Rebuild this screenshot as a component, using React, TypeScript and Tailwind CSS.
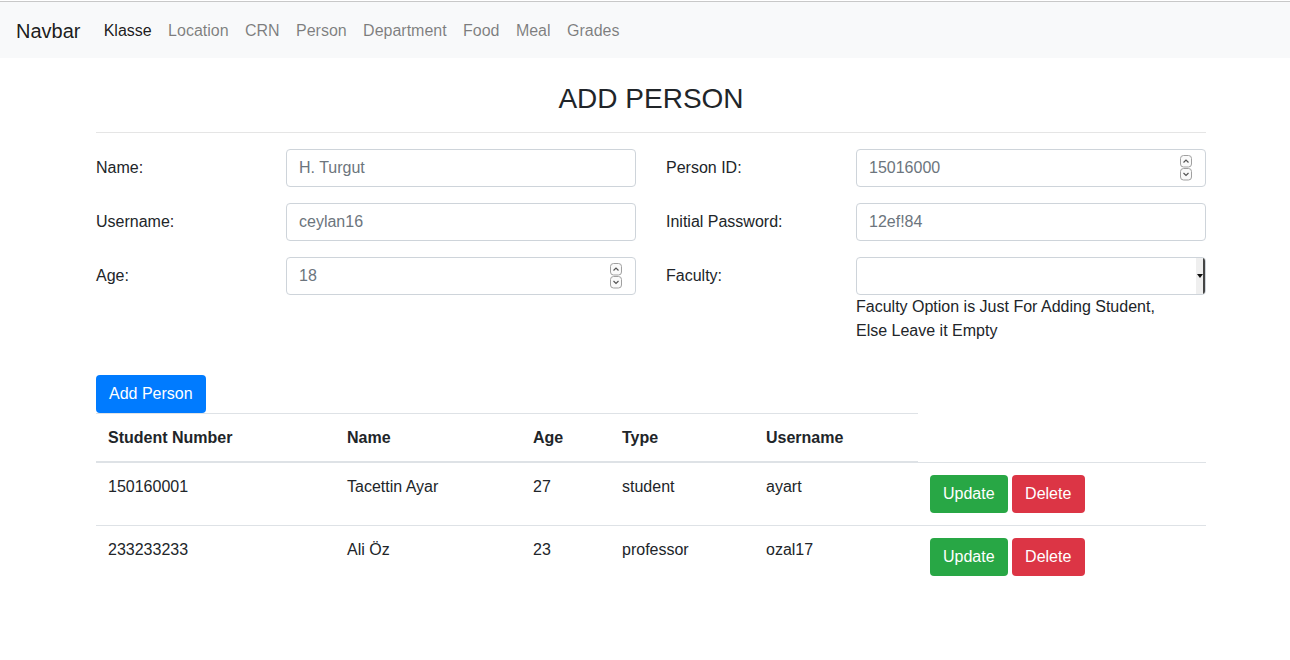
import React from 'react';

const NAV = ['Klasse', 'Location', 'CRN', 'Person', 'Department', 'Food', 'Meal', 'Grades'];

const PEOPLE = [
    { no: '150160001', name: 'Tacettin Ayar', age: '27', type: 'student', username: 'ayart' },
    { no: '233233233', name: 'Ali Öz', age: '23', type: 'professor', username: 'ozal17' },
];

// Small up/down spinner like the browser's number input
function Spinner() {
    return (
        <svg width="14" height="26" viewBox="0 0 14 26" className="absolute right-[13px] top-[6px]">
            <rect x="1.5" y="0.5" width="11" height="11.5" rx="3" fill="#fafafa" stroke="#a0a0a0" />
            <rect x="1.5" y="13.5" width="11" height="11.5" rx="3" fill="#fafafa" stroke="#a0a0a0" />
            <path d="M4.5 7.5 L7 5 L9.5 7.5" fill="none" stroke="#555" strokeWidth="1.2" />
            <path d="M4.5 18 L7 20.5 L9.5 18" fill="none" stroke="#555" strokeWidth="1.2" />
        </svg>
    );
}

function Field({ label, placeholder, number }: { label: string; placeholder: string; number?: boolean }) {
    return (
        <div className="flex items-center">
            <label className="w-[190px]">{label}</label>
            <div className="relative w-[350px]">
                <input
                    type="text"
                    placeholder={placeholder}
                    className="w-full h-[38px] px-3 rounded-[4px] border border-[#ced4da] bg-white text-[16px] text-[#495057] placeholder:text-[#6c757d] outline-none"
                />
                {number && <Spinner />}
            </div>
        </div>
    );
}

export default function App() {
    return (
        <div className="min-h-[660px] bg-white text-[#212529] text-[16px] leading-6" style={{ fontFamily: '"Liberation Sans", Arial, sans-serif' }}>
            <div className="h-px bg-white" />
            <div className="border-t border-[#c8c8c8]" />

            {/* Navbar */}
            <nav className="h-[56px] bg-[#f8f9fa] flex items-center px-4 pt-[2px]">
                <span className="text-[20px] leading-[30px] text-black/90 mr-[15px]">Navbar</span>
                {NAV.map((item, i) => (
                    <span key={item} className={`px-[8.2px] ${i === 0 ? 'text-black/90' : 'text-black/50'}`}>
                        {item}
                    </span>
                ))}
            </nav>

            <div className="w-[1110px] ml-[96px]">
                <h3 className="mt-[24px] text-center text-[28px] leading-[34px] font-normal">ADD PERSON</h3>
                <hr className="mt-[16px] mb-[16px] border-0 border-t border-black/10" />

                {/* Form */}
                <div className="grid grid-cols-2 gap-x-[30px] items-start">
                    <div className="flex flex-col gap-4">
                        <Field label="Name:" placeholder="H. Turgut" />
                        <Field label="Username:" placeholder="ceylan16" />
                        <Field label="Age:" placeholder="18" number />
                    </div>
                    <div className="flex flex-col gap-4">
                        <Field label="Person ID:" placeholder="15016000" number />
                        <Field label="Initial Password:" placeholder="12ef!84" />
                        <div className="flex items-start">
                            <label className="w-[190px] leading-[38px]">Faculty:</label>
                            <div className="w-[350px]">
                                <div className="h-[38px] flex rounded-[4px] border border-[#ced4da] bg-white overflow-hidden">
                                    <div className="flex-1" />
                                    <div className="w-[7px] bg-[#efefef] flex items-center justify-center">
                                        <svg width="6" height="4" viewBox="0 0 6 4">
                                            <path d="M0 0 H6 L3 4 Z" fill="#111" />
                                        </svg>
                                    </div>
                                    <div className="w-[2px] bg-[#444]" />
                                </div>
                                <p>Faculty Option is Just For Adding Student,</p>
                                <p>Else Leave it Empty</p>
                            </div>
                        </div>
                    </div>
                </div>

                <button className="mt-[32px] h-[38px] px-[13px] rounded-[4px] bg-[#007bff] text-white">Add Person</button>

                {/* Table */}
                <table className="w-full table-fixed border-collapse">
                    <colgroup>
                        <col className="w-[239px]" />
                        <col className="w-[186px]" />
                        <col className="w-[89px]" />
                        <col className="w-[144px]" />
                        <col className="w-[164px]" />
                        <col />
                    </colgroup>
                    <thead>
                        <tr>
                            {['Student Number', 'Name', 'Age', 'Type', 'Username'].map((h) => (
                                <th key={h} className="px-3 pt-3 pb-[11px] text-left font-bold border-t border-b-2 border-[#dee2e6]">
                                    {h}
                                </th>
                            ))}
                        </tr>
                    </thead>
                    <tbody>
                        {PEOPLE.map((p) => (
                            <tr key={p.no}>
                                <td className="p-3 align-top border-t border-[#dee2e6]">{p.no}</td>
                                <td className="p-3 align-top border-t border-[#dee2e6]">{p.name}</td>
                                <td className="p-3 align-top border-t border-[#dee2e6]">{p.age}</td>
                                <td className="p-3 align-top border-t border-[#dee2e6]">{p.type}</td>
                                <td className="p-3 align-top border-t border-[#dee2e6]">{p.username}</td>
                                <td className="p-3 align-top border-t border-[#dee2e6]">
                                    <div className="flex gap-1">
                                        <button className="h-[38px] px-[13px] rounded-[4px] bg-[#28a745] text-white">Update</button>
                                        <button className="h-[38px] px-[13.5px] rounded-[4px] bg-[#dc3545] text-white">Delete</button>
                                    </div>
                                </td>
                            </tr>
                        ))}
                    </tbody>
                </table>
            </div>
        </div>
    );
}
